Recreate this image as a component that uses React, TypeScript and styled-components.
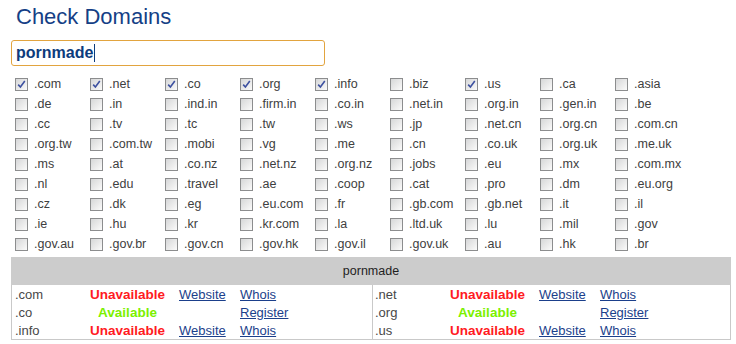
import React from 'react';
import styled, { createGlobalStyle } from 'styled-components';

// Global page reset
const GlobalStyle = createGlobalStyle`
  body {
    margin: 0;
    padding: 0;
    background: #ffffff;
    font-family: 'Liberation Sans', Arial, sans-serif;
  }
`;

const Page = styled.div`
  padding: 0 0 0 11px;
  width: 720px;
`;

const Title = styled.h1`
  margin: 0 0 0 5px;
  padding-top: 3px;
  font-size: 22px;
  line-height: 28px;
  font-weight: normal;
  color: #153f86;
`;

const SearchBox = styled.div`
  margin-top: 9px;
  box-sizing: border-box;
  width: 314px;
  height: 26px;
  border: 1px solid #e2a43f;
  border-radius: 3px;
  padding: 0 4px;
  display: flex;
  align-items: center;
  font-size: 16px;
  font-weight: bold;
  color: #0d3b7c;
`;

const Caret = styled.span`
  display: inline-block;
  width: 1px;
  height: 18px;
  margin-left: 1px;
  background: #0d3b7c;
`;

// Checkbox grid
const Grid = styled.div`
  margin: 8px 0 0 4px;
  display: grid;
  grid-template-columns: repeat(9, 75px);
  grid-auto-rows: 20px;
`;

const Option = styled.label`
  display: flex;
  align-items: center;
  gap: 6px;
  font-size: 12.5px;
  color: #404040;
  white-space: nowrap;
`;

const Box = styled.span`
  box-sizing: border-box;
  width: 13px;
  height: 13px;
  border: 1px solid #8c8d8e;
  background: linear-gradient(135deg, #d6d7d8 0%, #ececec 60%, #fbfbfb 100%);
  display: flex;
  align-items: center;
  justify-content: center;
`;

// Results table
const Results = styled.div`
  margin-top: 3px;
  width: 720px;
`;

const ResultsHeader = styled.div`
  height: 28px;
  background: #cccccc;
  display: flex;
  align-items: center;
  justify-content: center;
  font-size: 12.5px;
  color: #1e1e1e;
`;

const ResultsBody = styled.div`
  display: grid;
  grid-template-columns: 361px 1fr;
  border: 1px solid #c9c9c9;
  border-top: none;
`;

const Half = styled.div<{ $divider?: boolean; $pad: number }>`
  padding-left: ${(p) => p.$pad}px;
  border-right: ${(p) => (p.$divider ? '1px solid #c9c9c9' : 'none')};
`;

const Row = styled.div`
  display: grid;
  grid-template-columns: 73px 91px 61px 1fr;
  height: 18px;
  align-items: center;
  font-size: 13px;
`;

const Ext = styled.span`
  color: #474747;
`;

const Status = styled.span<{ $ok: boolean }>`
  padding-right: 12px;
  text-align: center;
  font-size: 13.5px;
  font-weight: bold;
  color: ${(p) => (p.$ok ? '#7cf000' : '#ff1a22')};
`;

const Link = styled.a`
  color: #1b3f8b;
  text-decoration: underline;
  cursor: pointer;
`;

const rows = [
  ['.com', '.net', '.co', '.org', '.info', '.biz', '.us', '.ca', '.asia'],
  ['.de', '.in', '.ind.in', '.firm.in', '.co.in', '.net.in', '.org.in', '.gen.in', '.be'],
  ['.cc', '.tv', '.tc', '.tw', '.ws', '.jp', '.net.cn', '.org.cn', '.com.cn'],
  ['.org.tw', '.com.tw', '.mobi', '.vg', '.me', '.cn', '.co.uk', '.org.uk', '.me.uk'],
  ['.ms', '.at', '.co.nz', '.net.nz', '.org.nz', '.jobs', '.eu', '.mx', '.com.mx'],
  ['.nl', '.edu', '.travel', '.ae', '.coop', '.cat', '.pro', '.dm', '.eu.org'],
  ['.cz', '.dk', '.eg', '.eu.com', '.fr', '.gb.com', '.gb.net', '.it', '.il'],
  ['.ie', '.hu', '.kr', '.kr.com', '.la', '.ltd.uk', '.lu', '.mil', '.gov'],
  ['.gov.au', '.gov.br', '.gov.cn', '.gov.hk', '.gov.il', '.gov.uk', '.au', '.hk', '.br'],
];

const checked = ['.com', '.net', '.co', '.org', '.info', '.us'];

const left = [
  { ext: '.com', ok: false },
  { ext: '.co', ok: true },
  { ext: '.info', ok: false },
];

const right = [
  { ext: '.net', ok: false },
  { ext: '.org', ok: true },
  { ext: '.us', ok: false },
];

function Check() {
  return (
    <svg width="9" height="9" viewBox="0 0 9 9">
      <path d="M1.2 4.6 L3.4 7 L7.8 1" fill="none" stroke="#3d51a0" strokeWidth="1.6" />
    </svg>
  );
}

function ResultRow({ ext, ok }: { ext: string; ok: boolean }) {
  return (
    <Row>
      <Ext>{ext}</Ext>
      <Status $ok={ok}>{ok ? 'Available' : 'Unavailable'}</Status>
      <span>{!ok && <Link>Website</Link>}</span>
      <span>{ok ? <Link>Register</Link> : <Link>Whois</Link>}</span>
    </Row>
  );
}

function App() {
  return (
    <>
      <GlobalStyle />
      <Page>
        <Title>Check Domains</Title>
        <SearchBox>
          pornmade
          <Caret />
        </SearchBox>

        <Grid>
          {rows.flat().map((ext) => (
            <Option key={ext}>
              <Box>{checked.includes(ext) && <Check />}</Box>
              {ext}
            </Option>
          ))}
        </Grid>

        <Results>
          <ResultsHeader>pornmade</ResultsHeader>
          <ResultsBody>
            <Half $divider $pad={3}>
              {left.map((r) => (
                <ResultRow key={r.ext} {...r} />
              ))}
            </Half>
            <Half $pad={2}>
              {right.map((r) => (
                <ResultRow key={r.ext} {...r} />
              ))}
            </Half>
          </ResultsBody>
        </Results>
      </Page>
    </>
  );
}

export default App;
